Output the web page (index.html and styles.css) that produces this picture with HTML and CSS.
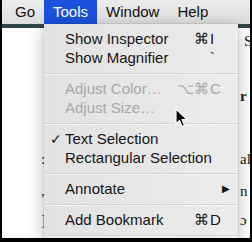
FILE: index.html
```html
<!DOCTYPE html>
<html lang="en">
<head>
<meta charset="UTF-8">
<title>Tools menu</title>
<link rel="stylesheet" href="styles.css">
</head>
<body>

<div class="screen">

<!-- Menu bar -->
<div class="menubar">
<div class="bar-item">Go</div>
<div class="bar-item active">Tools</div>
<div class="bar-item">Window</div>
<div class="bar-item">Help</div>
</div>

<!-- Document window behind the menu -->
<div class="window">
<div class="window-top"></div>
<div class="doc">
<p class="line l1">S</p>
<p class="line l2">r</p>
<p class="line l3"><span class="left">:</span><span class="right">al</span></p>
<p class="line l4"><span class="left">,</span><span class="right">n</span></p>
<p class="line l5"><span class="left">]</span><span class="right">ɔ</span></p>
</div>
</div>

<!-- Tools dropdown -->
<div class="menu">
<div class="item"><span class="check"></span><span class="label">Show Inspector</span><span class="mods">⌘</span><span class="key">I</span></div>
<div class="item"><span class="check"></span><span class="label">Show Magnifier</span><span class="mods"></span><span class="key">`</span></div>
<div class="sep"></div>
<div class="item disabled"><span class="check"></span><span class="label">Adjust Color…</span><span class="mods">⌥⌘</span><span class="key">C</span></div>
<div class="item disabled"><span class="check"></span><span class="label">Adjust Size…</span></div>
<div class="sep"></div>
<div class="item"><span class="check">✓</span><span class="label">Text Selection</span></div>
<div class="item"><span class="check"></span><span class="label">Rectangular Selection</span></div>
<div class="sep"></div>
<div class="item"><span class="check"></span><span class="label">Annotate</span><span class="mods"></span><span class="key arrow">▶</span></div>
<div class="sep"></div>
<div class="item"><span class="check"></span><span class="label">Add Bookmark</span><span class="mods">⌘</span><span class="key">D</span></div>
<div class="sep"></div>
</div>

<!-- Mouse pointer -->
<svg class="cursor" width="14" height="20" viewBox="0 0 14 20">
<path d="M1 1 L1 16 L4.5 12.5 L7 18.5 L9.5 17.5 L7 11.5 L12 11.5 Z" fill="#000" stroke="#fff" stroke-width="1.2" stroke-linejoin="round"/>
</svg>

</div>

</body>
</html>
```

FILE: styles.css
```css
* {
margin: 0;
padding: 0;
box-sizing: border-box;
}

body {
background: #000;
width: 252px;
height: 242px;
overflow: hidden;
font-family: "Liberation Sans", Arial, sans-serif;
}

.screen {
position: relative;
width: 248px;
height: 238px;
margin-left: 2px;
overflow: hidden;
background: #fff;
}

/* Menu bar */
.menubar {
display: flex;
height: 24px;
padding-left: 4px;
background: linear-gradient(#ececec, #dedede);
font-size: 15px;
color: #111;
}

.bar-item {
padding: 0 9px;
line-height: 24px;
}

.bar-item.active {
background: #1b52dc;
color: #fff;
}

/* Window behind */
.window-top {
height: 4px;
background: #2f4648;
}

.doc {
font-family: "Liberation Serif", "Times New Roman", serif;
font-size: 15px;
color: #222;
}

.line {
display: flex;
white-space: nowrap;
height: 18px;
}

.left {
flex-shrink: 0;
width: 238px;
padding-left: 39px;
}

.l1 { margin-top: 5px; padding-left: 242px; }
.l2 { margin-top: 37px; padding-left: 238px; font-weight: bold; }
.l3 { margin-top: 45px; }
.l4 { margin-top: 14px; }
.l5 { margin-top: 11px; }

/* Dropdown */
.menu {
position: absolute;
left: 42px;
top: 24px;
width: 194px;
padding-top: 5px;
background: linear-gradient(90deg, #e2e2e2, #ececec);
box-shadow: 0 4px 16px rgba(0, 0, 0, 0.28), 0 0 0 1px rgba(0, 0, 0, 0.06);
font-size: 15px;
color: #151515;
}

.item {
display: flex;
align-items: center;
height: 19px;
}

.check {
flex-shrink: 0;
width: 21px;
padding-left: 6px;
font-size: 14px;
}

.label {
flex: 1;
min-width: 0;
white-space: nowrap;
}

.mods {
flex-shrink: 0;
text-align: right;
}

.key {
flex-shrink: 0;
width: 29px;
padding-left: 1px;
}

.arrow {
font-size: 10px;
padding-left: 13px;
}

.disabled {
color: #a8a8a8;
}

.sep {
height: 12px;
display: flex;
align-items: center;
}

.sep::after {
content: '';
display: block;
width: 100%;
height: 1px;
background: #d2d2d2;
box-shadow: 0 1px 0 #f4f4f4;
}

.cursor {
position: absolute;
left: 173px;
top: 108px;
}
```
